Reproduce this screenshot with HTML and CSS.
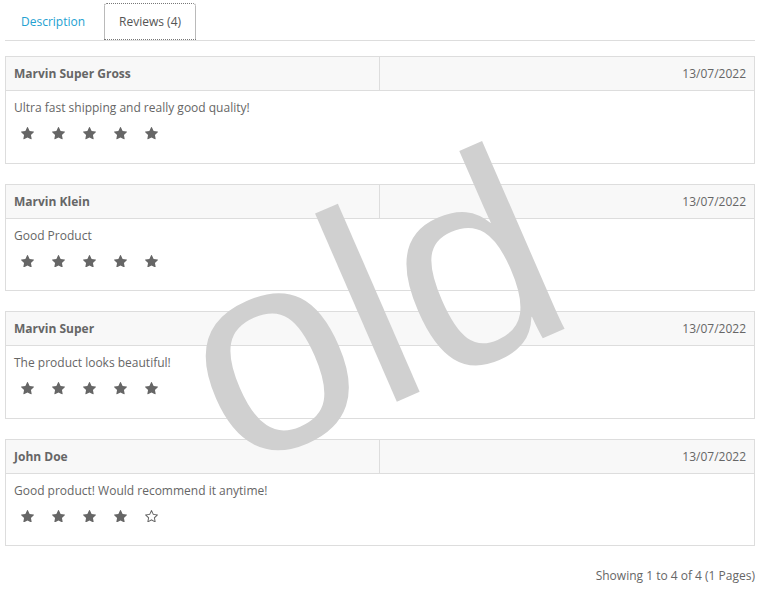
FILE: index.html
```html
<!DOCTYPE html>
<html lang="en">
<head>
<meta charset="utf-8">
<title>Reviews</title>
<link rel="stylesheet" href="styles.css">
</head>
<body>
<svg width="0" height="0" class="defs">
  <defs>
    <symbol id="star" viewBox="0 0 1664 1600"><path d="M1664 615q0 22-26 48l-363 354 86 500q1 7 1 20 0 21-10.5 35.5t-30.5 14.5q-19 0-40-12l-449-236-449 236q-22 12-40 12-21 0-31.5-14.5t-10.5-35.5q0-6 2-20l86-500-364-354q-25-27-25-48 0-37 56-46l502-73 225-455q19-41 49-41t49 41l225 455 502 73q56 9 56 46z"/></symbol>
    <symbol id="star-o" viewBox="64 32 1664 1600"><path d="M1201 1004l306-297-422-62-189-382-189 382-422 62 306 297-73 421 378-199 377 199zm527-357q0 22-26 48l-363 354 86 500q1 7 1 20 0 50-41 50-19 0-40-12l-449-236-449 236q-22 12-40 12-21 0-31.5-14.5t-10.5-35.5q0-6 2-20l86-500-364-354q-25-27-25-48 0-37 56-46l502-73 225-455q19-41 49-41t49 41l225 455 502 73q56 9 56 46z"/></symbol>
  </defs>
</svg>
<div class="page">
  <ul class="tabs">
    <li><a class="tab tab-first" href="#">Description</a></li>
    <li><a class="tab active" href="#">Reviews (4)</a></li>
  </ul>
  <div class="reviews">
    <table class="review">
      <tr class="head"><td class="name">Marvin Super Gross</td><td class="date">13/07/2022</td></tr>
      <tr><td colspan="2" class="body"><p>Ultra fast shipping and really good quality!</p>
        <div class="stars">
          <span class="st"><svg><use href="#star"/></svg></span><span class="st"><svg><use href="#star"/></svg></span><span class="st"><svg><use href="#star"/></svg></span><span class="st"><svg><use href="#star"/></svg></span><span class="st"><svg><use href="#star"/></svg></span>
        </div></td></tr>
    </table>
    <table class="review">
      <tr class="head"><td class="name">Marvin Klein</td><td class="date">13/07/2022</td></tr>
      <tr><td colspan="2" class="body"><p>Good Product</p>
        <div class="stars">
          <span class="st"><svg><use href="#star"/></svg></span><span class="st"><svg><use href="#star"/></svg></span><span class="st"><svg><use href="#star"/></svg></span><span class="st"><svg><use href="#star"/></svg></span><span class="st"><svg><use href="#star"/></svg></span>
        </div></td></tr>
    </table>
    <table class="review">
      <tr class="head"><td class="name">Marvin Super</td><td class="date">13/07/2022</td></tr>
      <tr><td colspan="2" class="body"><p>The product looks beautiful!</p>
        <div class="stars">
          <span class="st"><svg><use href="#star"/></svg></span><span class="st"><svg><use href="#star"/></svg></span><span class="st"><svg><use href="#star"/></svg></span><span class="st"><svg><use href="#star"/></svg></span><span class="st"><svg><use href="#star"/></svg></span>
        </div></td></tr>
    </table>
    <table class="review">
      <tr class="head"><td class="name">John Doe</td><td class="date">13/07/2022</td></tr>
      <tr><td colspan="2" class="body"><p>Good product! Would recommend it anytime!</p>
        <div class="stars">
          <span class="st"><svg><use href="#star"/></svg></span><span class="st"><svg><use href="#star"/></svg></span><span class="st"><svg><use href="#star"/></svg></span><span class="st"><svg><use href="#star"/></svg></span><span class="st"><svg><use href="#star-o"/></svg></span>
        </div></td></tr>
    </table>
  </div>
  <div class="results">Showing 1 to 4 of 4 (1 Pages)</div>
</div>
<svg class="watermark" width="764" height="594" viewBox="0 0 764 594">
  <text x="235" y="472" transform="rotate(-23.5 235 472)" class="wm-text">old</text>
</svg>
</body>
</html>
```

FILE: styles.css
```css
html, body {
  margin: 0;
  padding: 0;
  background: #fff;
}
body {
  font-family: "Open Sans", "Liberation Sans", sans-serif;
  font-size: 12px;
  line-height: 17px;
  color: #666;
  position: relative;
  width: 764px;
  height: 594px;
  overflow: hidden;
}
.defs {
  position: absolute;
  width: 0;
  height: 0;
}
.page {
  width: 750px;
  padding-left: 5px;
}
.tabs {
  display: flex;
  list-style: none;
  margin: 0;
  padding: 3px 0 0;
  border-bottom: 1px solid #ddd;
}
.tab {
  display: block;
  padding: 9px 14px;
  border: 1px solid transparent;
  margin-right: 4px;
  text-decoration: none;
  color: #23a1d1;
}
.tab-first {
  margin-left: 1px;
}
.tab.active {
  color: #555;
  border: 1px dotted #777;
  border-radius: 3px 3px 0 0;
}
.reviews {
  padding-top: 15px;
}
.review {
  width: 100%;
  border-collapse: collapse;
  table-layout: fixed;
  margin-bottom: 20px;
}
.review td {
  border: 1px solid #ddd;
  padding: 8px;
  vertical-align: top;
}
.head td {
  background: #f8f8f8;
}
.name {
  width: 357px;
  font-weight: bold;
}
.date {
  text-align: right;
}
.body p {
  margin: 0 0 9px;
}
.stars {
  display: flex;
  gap: 3.1px;
  height: 29.6px;
  margin-left: -0.6px;
}
.st {
  width: 28px;
  display: flex;
  justify-content: center;
  padding-top: 2px;
}
.st svg {
  width: 13px;
  height: 12.5px;
  fill: #666;
}
.results {
  text-align: right;
  padding-top: 1px;
}
.watermark {
  position: absolute;
  left: 0;
  top: 0;
  pointer-events: none;
}
.wm-text {
  font-family: "Liberation Sans", Arial, sans-serif;
  font-size: 283px;
  fill: #d0d0d0;
}
```
